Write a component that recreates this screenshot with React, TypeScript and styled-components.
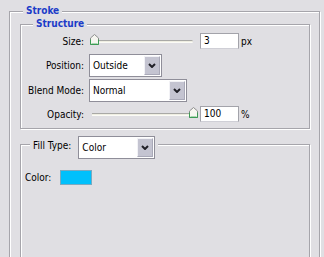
import React from 'react';
import styled, { createGlobalStyle } from 'styled-components';

const Global = createGlobalStyle`
  html, body { margin: 0; padding: 0; background: #e0dfe3; }
  body {
    width: 324px; height: 257px; overflow: hidden;
    font-family: "DejaVu Sans Condensed", "DejaVu Sans", "Liberation Sans", Arial, sans-serif;
    font-size: 10px; color: #000;
  }
`;

const Page = styled.div`
  box-sizing: border-box;
  height: 257px;
  overflow: hidden;
  padding: 11px 0 0 9px;
`;

const Group = styled.div<{ $w: number; $h: number; $mt?: number; $ml?: number }>`
  position: relative;
  box-sizing: border-box;
  width: ${(p) => p.$w}px;
  height: ${(p) => p.$h}px;
  margin-top: ${(p) => p.$mt ?? 0}px;
  margin-left: ${(p) => p.$ml ?? 0}px;
  border: 1px solid #a6a5ab;
  box-shadow: inset 1px 1px 0 #fff, 1px 1px 0 #fff;
`;

const Legend = styled.div<{ $left: number; $top?: number }>`
  position: absolute;
  left: ${(p) => p.$left}px;
  top: ${(p) => p.$top ?? -7}px;
  padding: 0 3px;
  background: #e0dfe3;
  line-height: 12px;
  font-size: 10px;
  font-weight: bold;
  color: #1c3cc8;
  display: flex;
  align-items: center;
`;

const PlainLegend = styled(Legend)`
  font-weight: normal;
  color: #000;
  gap: 7px;
`;

const LegendLabel = styled.span`
  margin-bottom: 3px;
`;

const Rows = styled.div`
  padding: 8px 0 0 0;
  display: flex;
  flex-direction: column;
`;

const Row = styled.div<{ $h: number; $mt?: number }>`
  display: grid;
  grid-template-columns: 63px auto;
  column-gap: 5px;
  align-items: center;
  height: ${(p) => p.$h}px;
  margin-top: ${(p) => p.$mt ?? 0}px;
`;

const Label = styled.span`
  text-align: right;
  white-space: nowrap;
`;

const Controls = styled.div`
  display: flex;
  align-items: center;
`;

const SliderBox = styled.div`
  position: relative;
  width: 108px;
  height: 16px;
  margin-right: 3px;
`;

const Track = styled.div`
  position: absolute;
  left: 3px;
  right: 4px;
  top: 7px;
  height: 3px;
  box-sizing: border-box;
  border-top: 1px solid #a9a9a6;
  border-bottom: 1px solid #fbfbf6;
  border-radius: 0 2px 2px 0;
  background: #efeee2;
`;

const Thumb = styled.svg`
  position: absolute;
  top: 1px;
  width: 9px;
  height: 11px;
`;

const NumberBox = styled.div`
  box-sizing: border-box;
  width: 39px;
  height: 16px;
  border: 1px solid #a3a3aa;
  border-bottom-color: #cfcfd6;
  background: #fff;
  padding-left: 3px;
  line-height: 14px;
  font-size: 10px;
`;

const Unit = styled.span`
  margin-left: 2px;
`;

const SelectBox = styled.div<{ $w: number }>`
  box-sizing: border-box;
  width: ${(p) => p.$w}px;
  height: 23px;
  border: 1px solid #8f8e99;
  background: #fff;
  display: flex;
  align-items: stretch;
`;

const SelectText = styled.span`
  flex: 1;
  padding-left: 3px;
  display: flex;
  align-items: center;
  font-size: 10px;
  font-weight: normal;
  color: #000;
`;

const SelectButton = styled.span`
  width: 16px;
  margin: 1px;
  box-sizing: border-box;
  border: 1px solid #f2f2f6;
  border-right-color: #a9a9b8;
  border-bottom-color: #a9a9b8;
  background: #c4c4d1;
  display: flex;
  align-items: center;
  justify-content: center;
`;

const ColorRow = styled.div`
  padding: 25px 0 0 4px;
  display: flex;
  align-items: center;
  gap: 9px;
`;

const Swatch = styled.div<{ $c: string }>`
  width: 32px;
  height: 15px;
  box-sizing: border-box;
  border: 1px solid #7aa9c0;
  background: ${(p) => p.$c};
`;

const Slider = ({ value }: { value: number }) => (
  <SliderBox>
    <Track />
    <Thumb viewBox="0 0 9 11" style={{ left: 1 + Math.round(value * 99) }}>
      <polygon points="0.5,4 4.5,0.5 8.5,4 8.5,10.5 0.5,10.5" fill="#f6f6f0" stroke="#8f8f8f" />
      <path d="M0.5 5.5V10.5H8.5V5.5" fill="none" stroke="#3d9b55" />
      <path d="M1.5 9.5H7.5" stroke="#a8d8b0" />
    </Thumb>
  </SliderBox>
);

const Chevron = () => (
  <svg width="8" height="5" viewBox="0 0 8 5">
    <path d="M1 1L4 4L7 1" fill="none" stroke="#202028" strokeWidth="2" />
  </svg>
);

const Select = ({ w, text }: { w: number; text: string }) => (
  <SelectBox $w={w}>
    <SelectText>{text}</SelectText>
    <SelectButton>
      <Chevron />
    </SelectButton>
  </SelectBox>
);

export default function App() {
  return (
    <>
      <Global />
      <Page>
        <Group $w={311} $h={260}>
          <Legend $left={13}>Stroke</Legend>
          <Group $w={290} $h={105} $mt={12} $ml={10}>
            <Legend $left={12}>Structure</Legend>
            <Rows>
              <Row $h={16}>
                <Label>Size:</Label>
                <Controls>
                  <Slider value={0} />
                  <NumberBox>3</NumberBox>
                  <Unit>px</Unit>
                </Controls>
              </Row>
              <Row $h={23} $mt={5}>
                <Label>Position:</Label>
                <Controls>
                  <Select w={73} text="Outside" />
                </Controls>
              </Row>
              <Row $h={23} $mt={2}>
                <Label>Blend Mode:</Label>
                <Controls>
                  <Select w={98} text="Normal" />
                </Controls>
              </Row>
              <Row $h={16} $mt={4}>
                <Label>Opacity:</Label>
                <Controls>
                  <Slider value={1} />
                  <NumberBox>100</NumberBox>
                  <Unit>%</Unit>
                </Controls>
              </Row>
            </Rows>
          </Group>
          <Group $w={290} $h={130} $mt={15} $ml={10}>
            <PlainLegend $left={9} $top={-9}>
              <LegendLabel>Fill Type:</LegendLabel>
              <Select w={77} text="Color" />
            </PlainLegend>
            <ColorRow>
              <span>Color:</span>
              <Swatch $c="#00c0fc" />
            </ColorRow>
          </Group>
        </Group>
      </Page>
    </>
  );
}
